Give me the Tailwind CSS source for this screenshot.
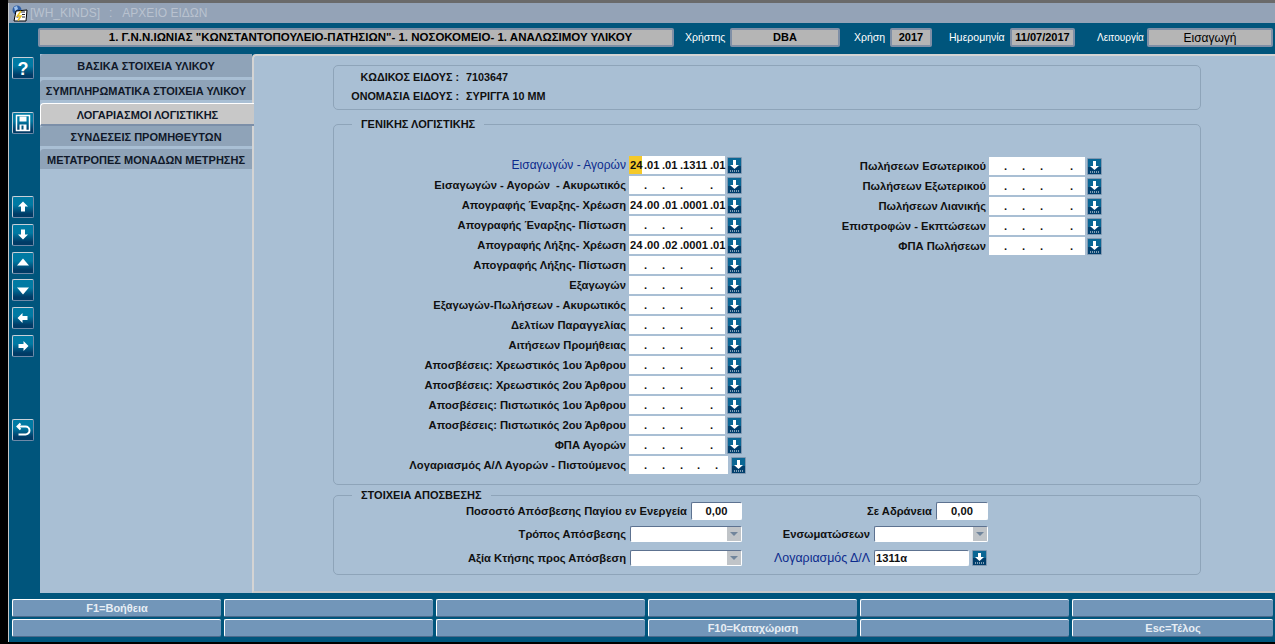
<!DOCTYPE html>
<html lang="el">
<head>
  <meta charset="UTF-8">
  <title>ΑΡΧΕΙΟ ΕΙΔΩΝ</title>
  <script src="https://cdn.jsdelivr.net/npm/@tailwindcss/browser@4"></script>
</head>
<body class="w-[1275px] h-[644px] overflow-hidden bg-black font-['Liberation_Sans',sans-serif] text-[11px]">
  <div class="ml-[8px] h-[642px] flex flex-col border-l border-[#c8c8c8] bg-[#00557c]">
    <!-- title bar -->
    <div class="h-[3px] -ml-px bg-[#6a6a6a]"></div>
    <div class="h-[20px] flex items-center bg-[#94a3b7] text-[12px] text-[#b9c2cf]">
      <svg class="w-[17px] h-[17px] ml-[2px] mr-[2px]" viewBox="0 0 17 17">
        <circle cx="6" cy="5" r="4.500" fill="#2f5fa5"/>
        <path d="M3 2l3-1 1 3-3 2z" fill="#9cc0ea"/>
        <path d="M5 6l11-1-1 11H3z" fill="#fff" stroke="#000"/>
        <path d="M10 7h4M11 9.500h3M5.500 12h2M11 12h3" stroke="#223" stroke-width="1"/>
        <path d="M10 6L6.500 11H10l-3 4.500" stroke="#e8c020" stroke-width="1.500" fill="none"/>
      </svg>
      <span>[WH_KINDS]</span><span class="ml-[9px]">:</span><span class="ml-[10px]">ΑΡΧΕΙΟ ΕΙΔΩΝ</span>
    </div>
    <!-- header row -->
    <div class="h-[31px] flex items-center pb-[2px] font-bold text-[11px] text-black">
      <div class="ml-[29px] w-[636px] h-[19px] flex items-center justify-center pl-[29px] rounded-[2px] bg-[#b5b5b5] border-2 border-[#7f8fa6] text-[11.500px] whitespace-nowrap">1. Γ.Ν.Ν.ΙΩΝΙΑΣ "ΚΩΝΣΤΑΝΤΟΠΟΥΛΕΙΟ-ΠΑΤΗΣΙΩΝ"- 1. ΝΟΣΟΚΟΜΕΙΟ- 1. ΑΝΑΛΩΣΙΜΟΥ ΥΛΙΚΟΥ</div>
      <span class="ml-[11px] w-[45px] text-[10.500px] font-normal text-white">Χρήστης</span>
      <div class="w-[110px] h-[19px] flex items-center justify-center rounded-[2px] bg-[#b5b5b5] border-2 border-[#7f8fa6]">DBA</div>
      <span class="ml-[14px] w-[36px] text-[10.500px] font-normal text-white">Χρήση</span>
      <div class="w-[42px] h-[19px] flex items-center justify-center rounded-[2px] bg-[#b5b5b5] border-2 border-[#7f8fa6]">2017</div>
      <span class="ml-[17px] w-[61px] text-[10.500px] font-normal text-white">Ημερομηνία</span>
      <div class="w-[65px] h-[19px] flex items-center justify-center rounded-[2px] bg-[#b5b5b5] border-2 border-[#7f8fa6]">11/07/2017</div>
      <span class="ml-[22px] w-[50px] text-[10px] font-normal text-white">Λειτουργία</span>
      <div class="w-[126px] h-[19px] flex items-center justify-center rounded-[2px] bg-[#b5b5b5] border-2 border-[#7f8fa6] font-normal text-[12px]">Εισαγωγή</div>
    </div>
    <!-- body -->
    <div class="flex h-[539px]">
      <!-- toolbar -->
      <div id="toolbar" class="w-[31px] flex flex-col items-start pl-[3px] pt-[3px]"></div>
      <!-- tabs -->
      <div class="w-[212px] bg-[#a9bfd4] font-bold text-[11px] text-[#101828] text-center">
        <div class="h-[23px] leading-[24px] bg-[#8fa3b8] rounded-tl-[4px]">ΒΑΣΙΚΑ ΣΤΟΙΧΕΙΑ ΥΛΙΚΟΥ</div>
        <div class="mt-[3px] h-[20px] leading-[22px] bg-[#8fa3b8] rounded-tl-[4px] whitespace-nowrap">ΣΥΜΠΛΗΡΩΜΑΤΙΚΑ ΣΤΟΙΧΕΙΑ ΥΛΙΚΟΥ</div>
        <div class="mt-[3px] h-[23px] leading-[22px] -mr-[2px] bg-[#c8c8c8] rounded-tl-[4px] border-t border-l border-white border-b-2 border-b-[#7c8fa8] relative">ΛΟΓΑΡΙΑΣΜΟΙ ΛΟΓΙΣΤΙΚΗΣ</div>
        <div class="h-[20px] leading-[22px] bg-[#8fa3b8] rounded-tl-[4px]">ΣΥΝΔΕΣΕΙΣ ΠΡΟΜΗΘΕΥΤΩΝ</div>
        <div class="mt-[3px] h-[20px] leading-[22px] bg-[#8fa3b8] rounded-tl-[4px] whitespace-nowrap">ΜΕΤΑΤΡΟΠΕΣ ΜΟΝΑΔΩΝ ΜΕΤΡΗΣΗΣ</div>
      </div>
      <!-- content -->
      <div class="flex-1 bg-[#a9bfd4] border-t-2 border-l-2 border-b-2 border-t-[#d4d4d4] border-l-[#d4d4d4] border-b-[#c8c8c8] rounded-tl-[4px] pl-[79px] pr-[74px] pt-[9px] text-[11.200px] font-bold text-[#101010]">
        <div class="h-[45px] border border-[#8ea4b9] rounded-[5px] pt-[2px] leading-[19px] whitespace-nowrap text-[10.800px]">
          <div class="flex"><span class="w-[125px] text-right">ΚΩΔΙΚΟΣ ΕΙΔΟΥΣ :</span><span class="ml-[7px]">7103647</span></div>
          <div class="flex"><span class="w-[125px] text-right">ΟΝΟΜΑΣΙΑ ΕΙΔΟΥΣ :</span><span class="ml-[7px]">ΣΥΡΙΓΓΑ 10 ΜΜ</span></div>
        </div>
        <div class="relative mt-[14px] h-[361px] border border-[#8ea4b9] rounded-[5px] flex pt-[31px]">
          <div class="absolute -top-[9px] left-[18px] px-[9px] bg-[#a9bfd4] text-[11px]">ΓΕΝΙΚΗΣ ΛΟΓΙΣΤΙΚΗΣ</div>
          <div id="left-col" class="w-[408px]"></div>
          <div id="right-col" class="ml-[98px] w-[262px] pt-[1px]"></div>
        </div>
        <div class="relative mt-[10px] h-[80px] border border-[#8ea4b9] rounded-[5px] flex pt-[6px]">
          <div class="absolute -top-[9px] left-[18px] px-[9px] bg-[#a9bfd4] text-[11px]">ΣΤΟΙΧΕΙΑ ΑΠΟΣΒΕΣΗΣ</div>
          <div class="w-[408px]">
            <div class="flex items-center justify-end h-[18px]">
              <span>Ποσοστό Απόσβεσης Παγίου εν Ενεργεία</span>
              <div class="ml-[4px] w-[51px] h-[18px] bg-white border border-[#5d7290] border-r-white border-b-white rounded-[2px] text-center">0,00</div>
            </div>
            <div class="flex items-center justify-end h-[16px] mt-[6px]">
              <span>Τρόπος Απόσβεσης</span>
              <div class="ml-[4px] w-[112px] h-[16px] bg-white border border-[#5d7290] border-r-white border-b-white rounded-[2px] flex justify-end"><div class="w-[14px] bg-[#c0c4c8] flex items-center justify-center"><span class="border-x-[4px] border-x-transparent border-t-[4px] border-t-[#71859c]"></span></div></div>
            </div>
            <div class="flex items-center justify-end h-[16px] mt-[8px]">
              <span>Αξία Κτήσης προς Απόσβεση</span>
              <div class="ml-[4px] w-[112px] h-[16px] bg-white border border-[#5d7290] border-r-white border-b-white rounded-[2px] flex justify-end"><div class="w-[14px] bg-[#c0c4c8] flex items-center justify-center"><span class="border-x-[4px] border-x-transparent border-t-[4px] border-t-[#71859c]"></span></div></div>
            </div>
          </div>
          <div class="w-[246px]">
            <div class="flex items-center justify-end h-[18px]">
              <span>Σε Αδράνεια</span>
              <div class="ml-[4px] w-[52px] h-[18px] bg-white border border-[#5d7290] border-r-white border-b-white rounded-[2px] text-center">0,00</div>
            </div>
            <div class="flex items-center justify-end h-[16px] mt-[6px]">
              <span>Ενσωματώσεων</span>
              <div class="ml-[4px] w-[114px] h-[16px] bg-white border border-[#5d7290] border-r-white border-b-white rounded-[2px] flex justify-end"><div class="w-[14px] bg-[#c0c4c8] flex items-center justify-center"><span class="border-x-[4px] border-x-transparent border-t-[4px] border-t-[#71859c]"></span></div></div>
            </div>
            <div class="flex items-center justify-end h-[16px] mt-[8px]">
              <span class="font-normal text-[12.400px] text-[#0c2a8c]">Λογαριασμός Δ/Λ</span>
              <div class="ml-[4px] w-[95px] h-[16px] bg-white border border-[#5d7290] border-r-white border-b-white rounded-[2px] pl-[1px] leading-[15px]">1311α</div>
              <svg class="ml-[3px] mr-[1px] w-[15px] h-[16px]" viewBox="0 0 15 16"><rect width="15" height="16" rx="1" fill="#7f97b0"/><rect x="1" y="1" width="13" height="7" fill="#0a6694"/><rect x="1" y="8" width="13" height="7" fill="#003e6c"/><path d="M6 3h3v4h3l-4.500 4L3 7h3z" fill="#fff"/><path d="M3 13h9" stroke="#fff" stroke-dasharray="1 1"/></svg>
            </div>
          </div>
        </div>
      </div>
    </div>
    <!-- function keys -->
    <div class="grid grid-cols-[209px_209px_209px_209px_209px_201px] grid-rows-[18px_18px] gap-x-[3px] gap-y-[2px] ml-[3px] mt-[6px] text-[11px] font-bold text-[#e8eef4] text-center leading-[16px]">
      <div class="bg-[#7296b9] rounded-[2px] border-t border-l border-white border-b border-b-[#4a6a8c]">F1=Βοήθεια</div>
      <div class="bg-[#7296b9] rounded-[2px] border-t border-l border-white border-b border-b-[#4a6a8c]"></div>
      <div class="bg-[#7296b9] rounded-[2px] border-t border-l border-white border-b border-b-[#4a6a8c]"></div>
      <div class="bg-[#7296b9] rounded-[2px] border-t border-l border-white border-b border-b-[#4a6a8c]"></div>
      <div class="bg-[#7296b9] rounded-[2px] border-t border-l border-white border-b border-b-[#4a6a8c]"></div>
      <div class="bg-[#7296b9] rounded-[2px] border-t border-l border-white border-b border-b-[#4a6a8c]"></div>
      <div class="bg-[#7296b9] rounded-[2px] border-t border-l border-white border-b border-b-[#4a6a8c]"></div>
      <div class="bg-[#7296b9] rounded-[2px] border-t border-l border-white border-b border-b-[#4a6a8c]"></div>
      <div class="bg-[#7296b9] rounded-[2px] border-t border-l border-white border-b border-b-[#4a6a8c]"></div>
      <div class="bg-[#7296b9] rounded-[2px] border-t border-l border-white border-b border-b-[#4a6a8c]">F10=Καταχώριση</div>
      <div class="bg-[#7296b9] rounded-[2px] border-t border-l border-white border-b border-b-[#4a6a8c]"></div>
      <div class="bg-[#7296b9] rounded-[2px] border-t border-l border-white border-b border-b-[#4a6a8c]">Esc=Τέλος</div>
    </div>
  </div>
  <script>
    // account mask: every part is a fixed width box, the dots stay in line
    const widths = [14, 15, 15, 27, 11];
    const longWidths = [14, 15, 15, 14, 15, 10];

    function lookup(gap) {
      return `<svg class="${gap} w-[15px] h-[17px] shrink-0" viewBox="0 0 15 17"><rect width="15" height="17" rx="1" fill="#7f97b0"/><rect x="1" y="1" width="13" height="8" fill="#0a6694"/><rect x="1" y="9" width="13" height="7" fill="#003e6c"/><path d="M6 3h3v5h3l-4.500 4L3 8h3z" fill="#fff"/><path d="M3 14h9" stroke="#fff" stroke-dasharray="1 1"/></svg>`;
    }

    function mask(parts, sizes) {
      return sizes.map((w, i) => {
        const dot = i < sizes.length - 1 ? '<span class="w-[3px]">.</span>' : '';
        return `<span class="text-left" style="width:${w}px">${parts[i] || ''}</span>${dot}`;
      }).join('');
    }

    function row(label, parts, opts = {}) {
      const sizes = opts.long ? longWidths : widths;
      const labelClass = opts.blue ? 'font-normal text-[12px] text-[#0c2a8c]' : '';
      const boxClass = opts.long ? 'w-[99px]' : 'w-[96px]';
      const gap = opts.long ? 'ml-[3px]' : 'ml-[2px]';
      const first = opts.mark
        ? `<span class="absolute left-0 top-0 w-[13px] h-[18px] bg-[#f5c929]"></span>` : '';
      return `<div class="h-[18px] mb-[2px] flex items-center justify-end">
        <span class="whitespace-pre ${labelClass}">${label}</span>
        <div class="relative ml-[3px] ${boxClass} h-[18px] bg-white pl-[1px] flex items-center">${first}<div class="relative flex">${mask(parts, sizes)}</div></div>
        ${lookup(gap)}
      </div>`;
    }

    const leftRows = [
      ['Εισαγωγών - Αγορών', ['24', '01', '01', '1311', '01'], { blue: true, mark: true }],
      ['Εισαγωγών - Αγορών  - Ακυρωτικός', []],
      ['Απογραφής Έναρξης- Χρέωση', ['24', '00', '01', '0001', '01']],
      ['Απογραφής Έναρξης- Πίστωση', []],
      ['Απογραφής Λήξης- Χρέωση', ['24', '00', '02', '0001', '01']],
      ['Απογραφής Λήξης- Πίστωση', []],
      ['Εξαγωγών', []],
      ['Εξαγωγών-Πωλήσεων - Ακυρωτικός', []],
      ['Δελτίων Παραγγελίας', []],
      ['Αιτήσεων Προμήθειας', []],
      ['Αποσβέσεις: Χρεωστικός 1ου Άρθρου', []],
      ['Αποσβέσεις: Χρεωστικός 2ου Άρθρου', []],
      ['Αποσβέσεις: Πιστωτικός 1ου Άρθρου', []],
      ['Αποσβέσεις: Πιστωτικός 2ου Άρθρου', []],
      ['ΦΠΑ Αγορών', []],
    ];
    document.getElementById('left-col').innerHTML =
      leftRows.map(r => row(r[0], r[1], r[2])).join('') +
      `<div class="-mr-[4px]">${row('Λογαριασμός Α/Λ Αγορών - Πιστούμενος', [], { long: true })}</div>`;

    const rightRows = ['Πωλήσεων Εσωτερικού', 'Πωλήσεων Εξωτερικού', 'Πωλήσεων Λιανικής', 'Επιστροφών - Εκπτώσεων', 'ΦΠΑ Πωλήσεων'];
    document.getElementById('right-col').innerHTML = rightRows.map(l => row(l, [])).join('');

    // toolbar buttons with their gap from the one above
    const paths = {
      up: '<path d="M10.500 5l5 5h-3v5h-4v-5h-3z" fill="#fff"/>',
      down: '<path d="M8.500 5h4v5h3l-5 5-5-5h3z" fill="#fff"/>',
      top: '<path d="M10.500 6l6 7h-12z" fill="#fff"/>',
      bottom: '<path d="M4.500 8h12l-6 7z" fill="#fff"/>',
      left: '<path d="M5 10.500l5-5v3h5v4h-5v3z" fill="#fff"/>',
      right: '<path d="M16 10.500l-5-5v3H6v4h5v3z" fill="#fff"/>',
      back: '<path d="M8 4L5 7l3 3M5 7h8a3.500 3.500 0 0 1 0 8H6" fill="none" stroke="#fff" stroke-width="2"/>',
      save: '<path d="M4 3h13v15H4z" fill="none" stroke="#fff" stroke-width="1.500"/><path d="M7 4h7v5H7zM7 12h7v6H7z" fill="#fff"/><path d="M9 13h2v4H9z" fill="#00557c"/>',
      help: '<text x="10.500" y="17" text-anchor="middle" font-family="Liberation Sans" font-weight="bold" font-size="18" fill="#fff">?</text>',
    };
    const tools = [['help', 0], ['save', 33], ['up', 62], ['down', 6], ['top', 6], ['bottom', 5], ['left', 6], ['right', 6], ['back', 62]];
    document.getElementById('toolbar').innerHTML = tools.map(([name, gap]) =>
      `<svg class="w-[22px] h-[22px] shrink-0 rounded-[2px] border border-[#c8d0d8] border-r-[#6f8aa8] border-b-[#6f8aa8] bg-linear-to-b from-[#007aa3] from-40% to-[#003b66] to-85%" style="margin-top:${gap}px" viewBox="0.500 0.500 20 20">${paths[name]}</svg>`
    ).join('');
  </script>
</body>
</html>
